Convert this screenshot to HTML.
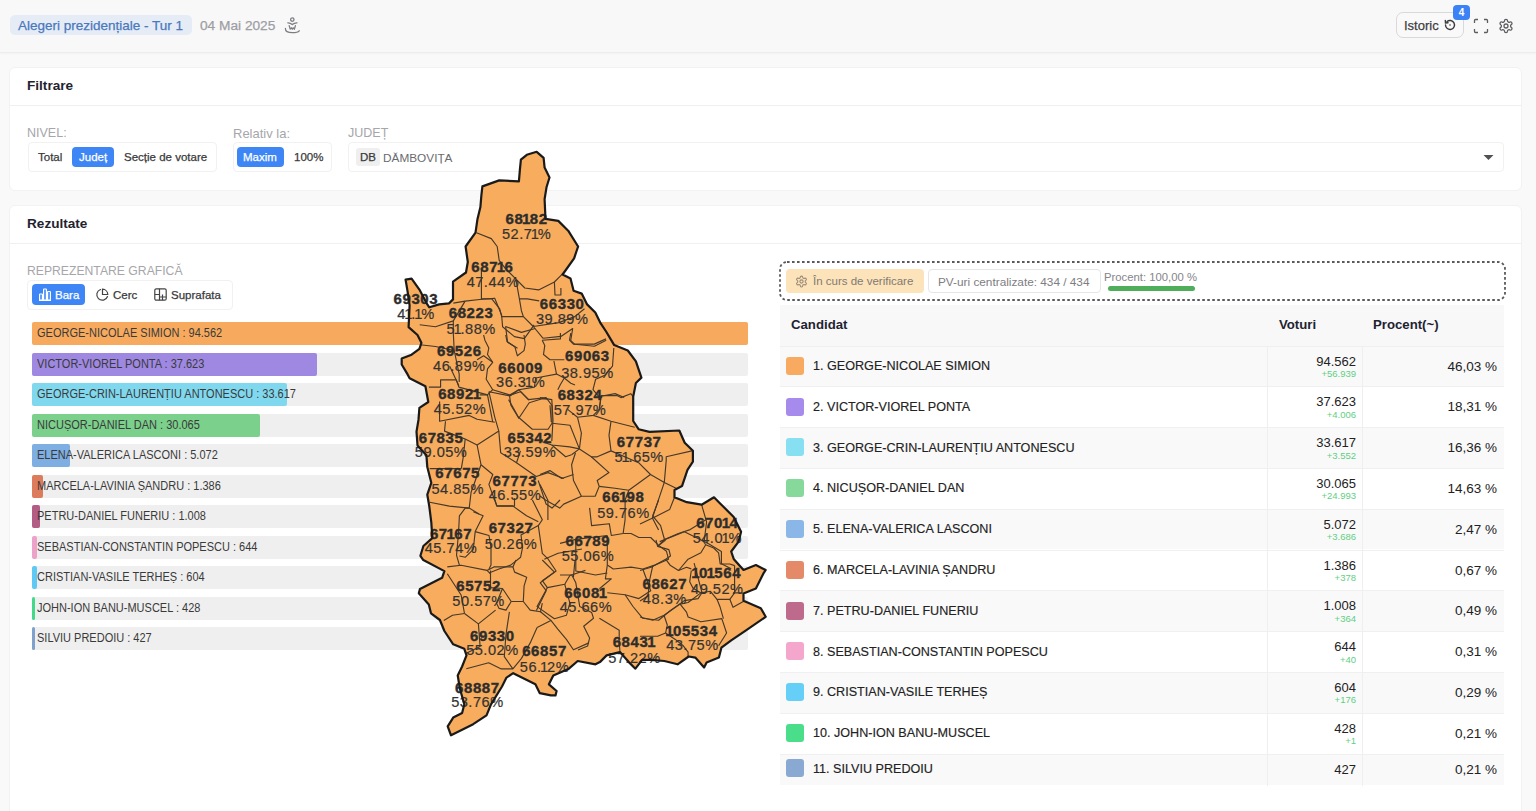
<!DOCTYPE html>
<html><head><meta charset="utf-8">
<style>
*{box-sizing:border-box;margin:0;padding:0}
html,body{width:1536px;height:811px;overflow:hidden}
body{background:#f9f9f9;font-family:"Liberation Sans",sans-serif;position:relative;color:#222}
.a{position:absolute;white-space:nowrap}
#hdr{position:absolute;left:0;top:0;width:1536px;height:53px;background:#f8f8f8;border-bottom:1px solid #ececec;box-shadow:0 1px 2px rgba(0,0,0,0.03)}
.card{position:absolute;background:#fff;border:1px solid #f2f2f2;border-radius:6px}
.ttl{font-weight:bold;font-size:13.6px;color:#1f2330}
.lbl{font-size:12.5px;color:#a6a6aa}
.m{-webkit-text-stroke:0.25px currentColor}
.seg{position:absolute;border:1px solid #f1f1f2;border-radius:4px;background:#fff}
.btn{position:absolute;background:#3e86f5;border-radius:4px}
.bar{position:absolute;left:32px;width:716px;height:23px;background:#efefef;border-radius:2px}
.bar i{position:absolute;left:0;top:0;bottom:0;border-radius:2px}
.bar span{position:absolute;left:5px;top:4px;font-size:11px;color:#3a3a3a;transform:scaleY(1.12);transform-origin:0 100%;top:5px}
.row{position:absolute;left:780px;width:724px;height:41px}
.row .sq{position:absolute;left:6px;width:18px;height:18px;border-radius:3px}
.row .nm{position:absolute;left:33px;font-size:12.6px;color:#222;-webkit-text-stroke:0.15px #222}
.row .vt{position:absolute;right:148px;font-size:13px;color:#222;text-align:right}
.row .dl{position:absolute;right:148px;font-size:9.5px;color:#5fcf83;text-align:right}
.row .pc{position:absolute;right:7px;font-size:13.5px;color:#222;text-align:right}
.vd{position:absolute;top:346px;width:1px;height:439.5px;background:#efeff0}
</style></head>
<body>
<div id="hdr">
  <div class="a" style="left:10px;top:15px;width:182px;height:20px;background:#e5ecf6;border-radius:5px"></div>
  <div class="a m" style="left:18px;top:17.5px;font-size:13.5px;color:#4a78bd">Alegeri prezidențiale - Tur 1</div>
  <div class="a m" style="left:200px;top:17.5px;font-size:13.7px;color:#9c9ea4">04 Mai 2025</div>

  <svg class="a" style="left:284px;top:17px" width="17" height="17" viewBox="0 0 17 17" fill="none" stroke="#7d7d82" stroke-width="1.3" stroke-linecap="round" stroke-linejoin="round">
    <circle cx="8.3" cy="2.6" r="1.7"/>
    <path d="M3.8 5.8 Q6 5.6 8.3 7.6 Q10.6 5.6 13 5.8"/>
    <path d="M5.2 8.6 L6.2 12.2 L7.4 10.8 L8.3 12.2 L9.2 10.8 L10.4 12.2 L11.4 8.6"/>
    <path d="M1.4 11.5 Q1.2 15.6 8.3 15.6 Q13.8 15.6 15.2 13.8"/>
  </svg>
  <div class="a" style="left:1396px;top:12px;width:68px;height:26px;border:1px solid #d9d9dc;border-radius:7px;background:#f9f9fa"></div>
  <div class="a m" style="left:1404px;top:17.5px;font-size:13px;color:#3e3e42">Istoric</div>
  <svg class="a" style="left:1443px;top:18px" width="14" height="14" viewBox="0 0 14 14" fill="none" stroke="#3a3a3e" stroke-width="1.4" stroke-linecap="round">
    <path d="M2.5 7 A4.5 4.5 0 1 0 4 3.6"/><path d="M2.3 2.5 L2.5 5 L5 4.8"/><circle cx="7" cy="7" r="0.8" fill="#3a3a3e" stroke="none"/>
  </svg>
  <div class="a" style="left:1453px;top:5px;width:17px;height:15px;background:#3b82f6;border-radius:4px;color:#fff;font-size:10px;font-weight:bold;text-align:center;line-height:15px">4</div>
  <svg class="a" style="left:1473px;top:18px" width="16" height="16" viewBox="0 0 16 16" fill="none" stroke="#5e5e62" stroke-width="1.3">
    <path d="M1.5 5 V2.5 Q1.5 1.5 2.5 1.5 H5 M11 1.5 H13.5 Q14.5 1.5 14.5 2.5 V5 M14.5 11 V13.5 Q14.5 14.5 13.5 14.5 H11 M5 14.5 H2.5 Q1.5 14.5 1.5 13.5 V11"/>
  </svg>
  <svg class="a" style="left:1498px;top:18px" width="16" height="16" viewBox="0 0 24 24" fill="none" stroke="#5e5e62" stroke-width="1.9" stroke-linejoin="round">
    <path d="M12.22 2h-.44a2 2 0 0 0-2 2v.18a2 2 0 0 1-1 1.73l-.43.25a2 2 0 0 1-2 0l-.15-.08a2 2 0 0 0-2.73.73l-.22.38a2 2 0 0 0 .73 2.73l.15.1a2 2 0 0 1 1 1.72v.51a2 2 0 0 1-1 1.74l-.15.09a2 2 0 0 0-.73 2.73l.22.38a2 2 0 0 0 2.73.73l.15-.08a2 2 0 0 1 2 0l.43.25a2 2 0 0 1 1 1.73V20a2 2 0 0 0 2 2h.44a2 2 0 0 0 2-2v-.18a2 2 0 0 1 1-1.73l.43-.25a2 2 0 0 1 2 0l.15.08a2 2 0 0 0 2.73-.73l.22-.39a2 2 0 0 0-.73-2.73l-.15-.08a2 2 0 0 1-1-1.74v-.5a2 2 0 0 1 1-1.74l.15-.09a2 2 0 0 0 .73-2.73l-.22-.38a2 2 0 0 0-2.73-.73l-.15.08a2 2 0 0 1-2 0l-.43-.25a2 2 0 0 1-1-1.73V4a2 2 0 0 0-2-2z"/><circle cx="12" cy="12" r="3"/>
  </svg>
</div>

<div class="card" style="left:9px;top:67px;width:1513px;height:124px"></div>
<div class="a ttl" style="left:27px;top:77.7px">Filtrare</div>
<div class="a" style="left:9px;top:105px;width:1513px;height:1px;background:#f0f0f1"></div>


<div class="a lbl" style="left:27px;top:126px">NIVEL:</div>
<div class="seg" style="left:28px;top:142px;width:189px;height:30px"></div>
<div class="a m" style="left:38px;top:151px;font-size:11.5px;color:#3a3a3a">Total</div>
<div class="btn" style="left:72px;top:147px;width:42px;height:20px"></div>
<div class="a m" style="left:79px;top:151px;font-size:11.5px;color:#fff">Județ</div>
<div class="a m" style="left:124px;top:151px;font-size:11.5px;color:#3a3a3a">Secție de votare</div>

<div class="a lbl" style="left:233px;top:125.5px;font-size:13px">Relativ la:</div>
<div class="seg" style="left:233px;top:142px;width:99px;height:30px"></div>
<div class="btn" style="left:237px;top:147px;width:47px;height:20px"></div>
<div class="a m" style="left:243px;top:151px;font-size:11.5px;color:#fff">Maxim</div>
<div class="a m" style="left:294px;top:151px;font-size:11.5px;color:#3a3a3a">100%</div>

<div class="a lbl" style="left:348px;top:126px">JUDEȚ</div>
<div class="seg" style="left:348px;top:142px;width:1156px;height:30px"></div>
<div class="a" style="left:356px;top:148px;width:24px;height:18px;background:#efeff0;border-radius:3px"></div>
<div class="a m" style="left:360px;top:151px;font-size:11.5px;color:#3a3a3a">DB</div>
<div class="a" style="left:383px;top:151px;font-size:11.8px;color:#6a6a6e">DĂMBOVIȚA</div>
<svg class="a" style="left:1483px;top:154px" width="11" height="7" viewBox="0 0 11 7"><path d="M0.5 1 H10.5 L5.5 6 Z" fill="#505055"/></svg>

<div class="card" style="left:9px;top:205px;width:1513px;height:700px"></div>
<div class="a ttl" style="left:27px;top:216.2px">Rezultate</div>
<div class="a" style="left:9px;top:243px;width:1513px;height:1px;background:#f0f0f1"></div>

<div class="a lbl" style="left:27px;top:264px;font-size:12.2px">REPREZENTARE GRAFICĂ</div>
<div class="seg" style="left:27px;top:280px;width:206px;height:30px"></div>
<div class="btn" style="left:32px;top:284px;width:53px;height:21px"></div>
<svg class="a" style="left:38px;top:288px" width="14" height="13" viewBox="0 0 14 13" fill="none" stroke="#fff" stroke-width="1.2"><path d="M1 12.5 H13"/><rect x="1.6" y="6" width="2.8" height="6" rx="0.5"/><rect x="5.6" y="1" width="2.8" height="11" rx="0.5"/><rect x="9.6" y="3.5" width="2.8" height="8.5" rx="0.5"/></svg>
<div class="a m" style="left:55px;top:289px;font-size:11.5px;color:#fff">Bara</div>
<svg class="a" style="left:95px;top:288px" width="14" height="14" viewBox="0 0 14 14" fill="none" stroke="#444" stroke-width="1.2" stroke-linecap="round"><path d="M12.5 8.5 A5.5 5.5 0 1 1 5.5 1.5"/><path d="M7.5 1.2 A5.5 5.5 0 0 1 12.8 6.5 H7.5 Z"/></svg>
<div class="a m" style="left:113px;top:289px;font-size:11.5px;color:#3a3a3a">Cerc</div>
<svg class="a" style="left:154px;top:288px" width="13" height="13" viewBox="0 0 13 13" fill="none" stroke="#444" stroke-width="1.2"><rect x="0.8" y="0.8" width="11.4" height="11.4" rx="1.5"/><path d="M5.5 0.8 V12.2 M0.8 6.5 H5.5 M8.5 6.5 V12.2 M5.5 9 H12.2"/></svg>
<div class="a m" style="left:171px;top:289px;font-size:11.5px;color:#3a3a3a">Suprafata</div>
<div class="bar" style="top:322.2px"><i style="width:716.0px;background:#f7aa5e"></i><span>GEORGE-NICOLAE SIMION : 94.562</span></div>
<div class="bar" style="top:352.7px"><i style="width:284.9px;background:#9e88e2"></i><span>VICTOR-VIOREL PONTA : 37.623</span></div>
<div class="bar" style="top:383.2px"><i style="width:254.5px;background:#80d8ef"></i><span>GEORGE-CRIN-LAURENȚIU ANTONESCU : 33.617</span></div>
<div class="bar" style="top:413.7px"><i style="width:227.6px;background:#7bd08b"></i><span>NICUȘOR-DANIEL DAN : 30.065</span></div>
<div class="bar" style="top:444.2px"><i style="width:38.4px;background:#7eaee2"></i><span>ELENA-VALERICA LASCONI : 5.072</span></div>
<div class="bar" style="top:474.7px"><i style="width:10.5px;background:#dd7c5c"></i><span>MARCELA-LAVINIA ȘANDRU : 1.386</span></div>
<div class="bar" style="top:505.2px"><i style="width:7.6px;background:#b35c84"></i><span>PETRU-DANIEL FUNERIU : 1.008</span></div>
<div class="bar" style="top:535.7px"><i style="width:4.9px;background:#eda2c9"></i><span>SEBASTIAN-CONSTANTIN POPESCU : 644</span></div>
<div class="bar" style="top:566.2px"><i style="width:4.6px;background:#5ec9f4"></i><span>CRISTIAN-VASILE TERHEȘ : 604</span></div>
<div class="bar" style="top:596.7px"><i style="width:3.4px;background:#42d98a"></i><span>JOHN-ION BANU-MUSCEL : 428</span></div>
<div class="bar" style="top:627.2px"><i style="width:3.4px;background:#7fa1cb"></i><span>SILVIU PREDOIU : 427</span></div>
<svg class="a" style="left:779px;top:261px" width="727" height="40"><rect x="1" y="1" width="725" height="38" rx="7" fill="none" stroke="#5a5a5e" stroke-width="1.8" stroke-dasharray="2.6 2.4"/></svg>
<div class="a" style="left:786px;top:269px;width:138px;height:24px;background:#fde3b9;border-radius:4px"></div>
<svg class="a" style="left:795px;top:275px" width="13" height="13" viewBox="0 0 24 24" fill="none" stroke="#9b8a78" stroke-width="2"><path d="M12.22 2h-.44a2 2 0 0 0-2 2v.18a2 2 0 0 1-1 1.73l-.43.25a2 2 0 0 1-2 0l-.15-.08a2 2 0 0 0-2.73.73l-.22.38a2 2 0 0 0 .73 2.73l.15.1a2 2 0 0 1 1 1.72v.51a2 2 0 0 1-1 1.74l-.15.09a2 2 0 0 0-.73 2.73l.22.38a2 2 0 0 0 2.73.73l.15-.08a2 2 0 0 1 2 0l.43.25a2 2 0 0 1 1 1.73V20a2 2 0 0 0 2 2h.44a2 2 0 0 0 2-2v-.18a2 2 0 0 1 1-1.73l.43-.25a2 2 0 0 1 2 0l.15.08a2 2 0 0 0 2.73-.73l.22-.39a2 2 0 0 0-.73-2.73l-.15-.08a2 2 0 0 1-1-1.74v-.5a2 2 0 0 1 1-1.74l.15-.09a2 2 0 0 0 .73-2.73l-.22-.38a2 2 0 0 0-2.73-.73l-.15.08a2 2 0 0 1-2 0l-.43-.25a2 2 0 0 1-1-1.73V4a2 2 0 0 0-2-2z"/><circle cx="12" cy="12" r="3"/></svg>
<div class="a" style="left:813px;top:275px;font-size:11.5px;color:#7e7a74">În curs de verificare</div>
<div class="a" style="left:928px;top:269px;width:173px;height:24px;border:1px solid #e6e6e8;border-radius:4px"></div>
<div class="a" style="left:938px;top:275px;font-size:11.8px;color:#7d7d82">PV-uri centralizate: 434 / 434</div>
<div class="a" style="left:1104px;top:270.5px;font-size:11.3px;color:#85858a">Procent: 100,00 %</div>
<div class="a" style="left:1108px;top:286px;width:87px;height:5px;background:#4eae5a;border-radius:3px"></div>
<div class="a" style="left:780px;top:305px;width:724px;height:41px;background:#f8f8f9"></div>
<div class="a ttl" style="left:791px;top:317.3px;font-size:13.2px">Candidat</div>
<div class="a ttl" style="left:1279px;top:317.3px;font-size:13.2px">Voturi</div>
<div class="a ttl" style="left:1373px;top:317.3px;font-size:13.2px">Procent(~)</div>
<div class="row" style="top:345.50px;height:40.8px;background:#f9f9fa;border-top:1px solid #f0f0f1"><i class="sq" style="top:10.3px;background:#f8ab60"></i><span class="nm" style="top:12.5px">1. GEORGE-NICOLAE SIMION</span><span class="vt" style="top:7px">94.562</span><span class="dl" style="top:21.5px">+56.939</span><span class="pc" style="top:12px">46,03 %</span></div>
<div class="row" style="top:386.30px;height:40.8px;background:#fff;border-top:1px solid #f0f0f1"><i class="sq" style="top:10.3px;background:#a78bec"></i><span class="nm" style="top:12.5px">2. VICTOR-VIOREL PONTA</span><span class="vt" style="top:7px">37.623</span><span class="dl" style="top:21.5px">+4.006</span><span class="pc" style="top:12px">18,31 %</span></div>
<div class="row" style="top:427.10px;height:40.8px;background:#f9f9fa;border-top:1px solid #f0f0f1"><i class="sq" style="top:10.3px;background:#86e0f2"></i><span class="nm" style="top:12.5px">3. GEORGE-CRIN-LAURENȚIU ANTONESCU</span><span class="vt" style="top:7px">33.617</span><span class="dl" style="top:21.5px">+3.552</span><span class="pc" style="top:12px">16,36 %</span></div>
<div class="row" style="top:467.90px;height:40.8px;background:#fff;border-top:1px solid #f0f0f1"><i class="sq" style="top:10.3px;background:#86d99a"></i><span class="nm" style="top:12.5px">4. NICUȘOR-DANIEL DAN</span><span class="vt" style="top:7px">30.065</span><span class="dl" style="top:21.5px">+24.993</span><span class="pc" style="top:12px">14,63 %</span></div>
<div class="row" style="top:508.70px;height:40.8px;background:#f9f9fa;border-top:1px solid #f0f0f1"><i class="sq" style="top:10.3px;background:#8ab7e8"></i><span class="nm" style="top:12.5px">5. ELENA-VALERICA LASCONI</span><span class="vt" style="top:7px">5.072</span><span class="dl" style="top:21.5px">+3.686</span><span class="pc" style="top:12px">2,47 %</span></div>
<div class="row" style="top:549.50px;height:40.8px;background:#fff;border-top:1px solid #f0f0f1"><i class="sq" style="top:10.3px;background:#e58a68"></i><span class="nm" style="top:12.5px">6. MARCELA-LAVINIA ȘANDRU</span><span class="vt" style="top:7px">1.386</span><span class="dl" style="top:21.5px">+378</span><span class="pc" style="top:12px">0,67 %</span></div>
<div class="row" style="top:590.30px;height:40.8px;background:#f9f9fa;border-top:1px solid #f0f0f1"><i class="sq" style="top:10.3px;background:#bd6a8d"></i><span class="nm" style="top:12.5px">7. PETRU-DANIEL FUNERIU</span><span class="vt" style="top:7px">1.008</span><span class="dl" style="top:21.5px">+364</span><span class="pc" style="top:12px">0,49 %</span></div>
<div class="row" style="top:631.10px;height:40.8px;background:#fff;border-top:1px solid #f0f0f1"><i class="sq" style="top:10.3px;background:#f4a6cc"></i><span class="nm" style="top:12.5px">8. SEBASTIAN-CONSTANTIN POPESCU</span><span class="vt" style="top:7px">644</span><span class="dl" style="top:21.5px">+40</span><span class="pc" style="top:12px">0,31 %</span></div>
<div class="row" style="top:671.90px;height:40.8px;background:#f9f9fa;border-top:1px solid #f0f0f1"><i class="sq" style="top:10.3px;background:#66cff8"></i><span class="nm" style="top:12.5px">9. CRISTIAN-VASILE TERHEȘ</span><span class="vt" style="top:7px">604</span><span class="dl" style="top:21.5px">+176</span><span class="pc" style="top:12px">0,29 %</span></div>
<div class="row" style="top:712.70px;height:40.8px;background:#fff;border-top:1px solid #f0f0f1"><i class="sq" style="top:10.3px;background:#4ade8a"></i><span class="nm" style="top:12.5px">10. JOHN-ION BANU-MUSCEL</span><span class="vt" style="top:7px">428</span><span class="dl" style="top:21.5px">+1</span><span class="pc" style="top:12px">0,21 %</span></div>
<div class="row" style="top:753.50px;height:31.5px;background:#f9f9fa;border-top:1px solid #f0f0f1"><i class="sq" style="top:4.9px;background:#8aa9d2"></i><span class="nm" style="top:7.2px">11. SILVIU PREDOIU</span><span class="vt" style="top:7.5px">427</span><span class="dl" style="top:0px"></span><span class="pc" style="top:7.2px">0,21 %</span></div>
<div class="vd" style="left:1267px"></div><div class="vd" style="left:1362px"></div>
<svg class="a" style="left:0;top:0" width="1536" height="811" viewBox="0 0 1536 811">
<defs><clipPath id="cp"><polygon points="536.7,151.8 543.6,157.8 544.6,167.6 549.5,177.5 546.5,187.3 544.6,199.2 545.5,218.9 558.3,220.9 568.2,230.7 578.1,246.5 574.1,258.3 562.6,274.5 570.5,278.5 573.6,290.8 581.7,293.6 587.1,304.4 595.3,312.5 600.7,323.4 606.1,331.5 614.2,345.1 627.8,350.5 635.9,361.4 641.4,377.6 635.9,383 633.2,396.6 633.2,421 638.6,429.2 649.5,431.9 679.3,430.5 684.7,442.7 692.9,450.8 692.9,461.7 687.5,469.8 682,486.1 674.5,489.9 674.5,497.3 686.8,502.2 701.6,504.7 714,497.3 718.9,502.2 733.7,517 741.1,531.8 738.6,541.6 731.2,551.5 733.7,558.9 743.5,570 755.9,565.1 765.7,570 763.3,573.7 755.9,588.5 743.5,593.4 743.5,600.8 760.8,608.2 765.7,616.8 746,630.4 731.2,640.3 721.4,647.7 718.9,657.5 706.6,662.4 704.1,667.4 695.3,657.6 688.7,656.5 677.6,664.3 664.3,661 651,659.9 642.1,659.9 635.4,668.7 628.8,662.1 619.9,652.1 606.6,655.4 599.9,662.1 595.5,664.3 577.7,661 568.9,668.7 553.3,675.4 548.9,684.3 556.6,691 555.5,695.4 550.9,695.4 539.8,693.2 535.4,684.3 513.2,673.2 506.5,677.6 502,686.5 491,704.3 486.5,715.3 473.2,724.2 451,735.3 447.7,726.4 453.2,717.6 462.1,713.1 464.3,704.3 459.9,688.7 457.7,675.4 462.1,666.5 466.5,655.4 464.3,648.8 453.2,644.3 444.4,631 439.9,620 431,613.3 428.8,604.4 418.8,593.3 420,588.9 442.1,577.8 444.4,571.1 423.3,560 420.4,555.8 423.4,546 432.3,538.1 431.3,522.3 429.3,506.5 427.3,494.7 431.3,482.8 427.3,467.1 426.4,455.2 417.5,445.4 416.5,431.6 418.5,419.7 419.4,407.9 428.3,402 425.4,386.2 409.6,378.3 407.6,374.4 401.7,364.5 401.7,358.6 411.6,354.7 419.4,348.8 421.4,342.8 417.5,335 408.6,327.1 409.6,305.4 407.6,291.6 405.6,279.7 411.6,278.7 419.4,289.6 427.3,304.4 429.3,307.3 439.2,304.4 449,303.4 453,299.4 453,281.7 466,272.5 467.8,262 465.6,246.5 475.5,232.7 477.5,218.9 480.4,207 481.4,195.2 482.4,186.4 499.2,180.4 518.9,181.4 519.9,169.6 520.9,159.7 526.8,154.8"/></clipPath></defs><polygon id="shape" points="536.7,151.8 543.6,157.8 544.6,167.6 549.5,177.5 546.5,187.3 544.6,199.2 545.5,218.9 558.3,220.9 568.2,230.7 578.1,246.5 574.1,258.3 562.6,274.5 570.5,278.5 573.6,290.8 581.7,293.6 587.1,304.4 595.3,312.5 600.7,323.4 606.1,331.5 614.2,345.1 627.8,350.5 635.9,361.4 641.4,377.6 635.9,383 633.2,396.6 633.2,421 638.6,429.2 649.5,431.9 679.3,430.5 684.7,442.7 692.9,450.8 692.9,461.7 687.5,469.8 682,486.1 674.5,489.9 674.5,497.3 686.8,502.2 701.6,504.7 714,497.3 718.9,502.2 733.7,517 741.1,531.8 738.6,541.6 731.2,551.5 733.7,558.9 743.5,570 755.9,565.1 765.7,570 763.3,573.7 755.9,588.5 743.5,593.4 743.5,600.8 760.8,608.2 765.7,616.8 746,630.4 731.2,640.3 721.4,647.7 718.9,657.5 706.6,662.4 704.1,667.4 695.3,657.6 688.7,656.5 677.6,664.3 664.3,661 651,659.9 642.1,659.9 635.4,668.7 628.8,662.1 619.9,652.1 606.6,655.4 599.9,662.1 595.5,664.3 577.7,661 568.9,668.7 553.3,675.4 548.9,684.3 556.6,691 555.5,695.4 550.9,695.4 539.8,693.2 535.4,684.3 513.2,673.2 506.5,677.6 502,686.5 491,704.3 486.5,715.3 473.2,724.2 451,735.3 447.7,726.4 453.2,717.6 462.1,713.1 464.3,704.3 459.9,688.7 457.7,675.4 462.1,666.5 466.5,655.4 464.3,648.8 453.2,644.3 444.4,631 439.9,620 431,613.3 428.8,604.4 418.8,593.3 420,588.9 442.1,577.8 444.4,571.1 423.3,560 420.4,555.8 423.4,546 432.3,538.1 431.3,522.3 429.3,506.5 427.3,494.7 431.3,482.8 427.3,467.1 426.4,455.2 417.5,445.4 416.5,431.6 418.5,419.7 419.4,407.9 428.3,402 425.4,386.2 409.6,378.3 407.6,374.4 401.7,364.5 401.7,358.6 411.6,354.7 419.4,348.8 421.4,342.8 417.5,335 408.6,327.1 409.6,305.4 407.6,291.6 405.6,279.7 411.6,278.7 419.4,289.6 427.3,304.4 429.3,307.3 439.2,304.4 449,303.4 453,299.4 453,281.7 466,272.5 467.8,262 465.6,246.5 475.5,232.7 477.5,218.9 480.4,207 481.4,195.2 482.4,186.4 499.2,180.4 518.9,181.4 519.9,169.6 520.9,159.7 526.8,154.8" fill="#f8ac5d"/>
<g id="inner" clip-path="url(#cp)" fill="none" stroke="#45392b" stroke-width="1.15" stroke-linejoin="round"><polyline points="476.5,232.7 491.3,238.6 497.2,246.5 499.2,260.3 505.1,268.2 515,278.1 524.8,288 538.6,289.9 554.4,282 562.3,274.1"/><polyline points="481.4,268.2 481.4,299.2 494.7,298.2 501.6,315 502.6,326.8 514.4,336.6 524.3,338.6 534.1,324.8"/><polyline points="554.4,282 555,295 560.9,295 560.9,288"/><polyline points="515.5,277.2 519.4,298.9 521.4,310.7 523.4,316.6"/><polyline points="519.4,298.9 527.3,298.9 539.2,300.9"/><polyline points="482,298.9 491.8,298.9 499.7,308.8 501.7,316.6 509.6,316.6 523.4,316.6 533.3,326.5 543.1,338.3"/><polyline points="533.3,326.5 558.9,322.6 574.7,316.6 584.5,308.8"/><polyline points="543.1,338.3 560.9,336.4 572.7,328.5 570.7,340.3 574.7,344.3 594.4,346.2 606.2,340.3"/><polyline points="505.6,326.5 521.4,332.4 535.2,328.5"/><polyline points="505.6,326.5 507.6,342.3 517.5,348.2"/><polyline points="453.3,303.1 465.1,301.1 481.9,299.2"/><polyline points="419.7,324.8 435.5,326.8 453.3,320.9 465.1,301.1"/><polyline points="453.3,320.9 453.3,332.7 454.2,350.5 459.2,374.1 459.2,382"/><polyline points="417.8,344.5 435.5,346.5 454.2,350.5"/><polyline points="488.9,391.7 494.8,417.3 498.8,431.1 477.1,445 465.2,439 444.5,431.1 445.5,421.3"/><polyline points="465.2,439 463.3,456.8 461.3,468.6"/><polyline points="477.1,445 481,464.7 471.1,492.3 469.2,508.1 465.4,507.9 459.4,515.8 458.5,533.5 456.5,555.2 459.4,565.1"/><polyline points="429.7,468.6 461.3,468.6"/><polyline points="429.7,502.2 449.4,506.1 469.2,508.1 479,514"/><polyline points="481,464.7 492.8,474.5 488.9,484.4 496.8,506.1 514.5,506.1 514.5,498.2"/><polyline points="498.8,431.1 500.7,452.8 516.5,462.7 520.5,450.9"/><polyline points="516.5,462.7 536.2,476.5 548.1,472.6 563.8,478.5"/><polyline points="538.2,480.5 546.1,504.1 552,508.1 560,500"/><polyline points="488.9,391.7 508.6,395.6 520.5,391.7 528.3,399.6 546.1,397.6 552,405.5 552,423.3 548.1,429.2 532.3,429.2 518.5,417.3 508.6,399.6"/><polyline points="552,423.3 570,425.2 579.4,448.9"/><polyline points="540,397.6 551.8,399.6 553,420 551.8,441"/><polyline points="567.6,409.4 577.5,417.3 593.3,415.4 599.2,409.4 601.1,395.6 616.9,395.6 620.9,397.6 630.7,393.7 633.2,396.6"/><polyline points="577.5,417.3 581.4,433.1 579.4,448.9 571.6,454.8"/><polyline points="593.3,415.4 611,421.3 634.7,427.2"/><polyline points="611,421.3 609,435.1 611,450.9 597.2,456.8 591.3,456.8 579.4,448.9"/><polyline points="540,441 551.8,445 569.6,446.9 579.4,448.9"/><polyline points="551.8,445 565.6,456.8 571.6,454.8"/><polyline points="575.5,452.8 571.6,464.7 573.5,480.5 581.4,496.2 595.2,496.2 599.2,486.4 597.2,480.5 609,472.6 591.3,456.8"/><polyline points="540,474.5 549.9,470.6 561.7,478.5 573.5,474.5"/><polyline points="611,450.9 638.6,462.7 650.5,474.5 664.3,482.4 666.2,460.7 666.2,456.8 691.9,450.9"/><polyline points="664.3,482.4 676.1,488.3"/><polyline points="650.5,474.5 628.8,490.3 625.1,500 625.1,519.7"/><polyline points="664.3,482.4 652.4,517.9 658.6,530"/><polyline points="599.2,486.4 615,488.3 628.8,490.3"/><polyline points="581.4,496.2 563.7,504.1 559.7,508.1 545.9,500.2 540,496"/><polyline points="540,484.4 547.9,500.2 547.9,520"/><polyline points="473.3,511.8 483.1,515.8 475.2,531.6 473.3,549.3 465.4,557.2 459.4,556"/><polyline points="475.2,531.6 489,535.5 491,547.3 491,565.1 489,569"/><polyline points="489,573 498.9,569 510.7,565.1 520.6,557.2 522.6,547.3 521,535 538.3,525.6"/><polyline points="495,500 496.9,505.9 512.7,505.9 526.5,515.8 538.3,521.7"/><polyline points="532.4,500 542.3,519.7 538.3,525.6 542.3,553.3 548.2,559.2 556.1,571 540.3,582.8 546.2,590.7 536.4,610.5"/><polyline points="544.3,559.2 558.1,553.3 582,549"/><polyline points="589.6,507.9 591.6,525.6 609.3,523.7 611.3,535.5 623.1,533.5 625.1,519.7"/><polyline points="623.1,533.5 631,533.5 638.9,537.5 650.7,537.5 658.6,545.4 666.5,551.3 668.5,559.2 654.7,565.1 642.8,569 631,567.1 613.3,569 607.3,565.1"/><polyline points="658.6,500 652.7,515.8 660.6,525.6 664.5,539.5 658.6,545.4"/><polyline points="664.5,539.5 678.3,533.5 690.2,529.6 706,519.7"/><polyline points="607.3,535.5 607.3,565.1 605.4,578.9 611.3,578.9 599.4,588.8"/><polyline points="560,543.4 575.8,539.4 607.3,535.5"/><polyline points="575.8,539.4 575.8,571 595.5,575 607.3,573"/><polyline points="560,575 571.8,575 575.8,582.8 577.8,594.7 579.7,606.5 591.6,612.4 593.5,618.3 583.7,626.2 589.6,638.1 587.6,646 578,650"/><polyline points="607.3,592.7 625.1,594.7 638.9,598.6 650.7,590.7 642.8,569"/><polyline points="625.1,594.7 633,606.5 642.8,618.3 658.6,620.3 670.5,610.5 684.3,600.6 698.1,598.6 702,592.7 694.1,563.1"/><polyline points="599.4,618.3 619.2,630.2 619.2,642 620,652"/><polyline points="674.5,497.3 669.6,509.6 654.8,517 640,524"/><polyline points="701.6,504.7 706.6,521.9 704.1,541.6 709,544.1 721.4,551.5 721.4,563.8 731.2,568.8"/><polyline points="659.7,541.6 684.4,531.8 704.1,541.6"/><polyline points="447.3,566.9 461.1,565.2 487,570.4 490.5,573.8"/><polyline points="487,570.4 493.9,566.9 512.9,566.9 516,560"/><polyline points="490.5,570.4 490.5,587.6 502.5,588.5 511.2,601.5 506,610.1 499.1,608.4 496.5,603.2 502.5,588.5"/><polyline points="512.9,566.9 514.6,572.1 526.7,577.3 524.1,585.9 523.3,601.5 511.2,601.5"/><polyline points="523.3,601.5 530.2,610.1 540.5,611.8 542.3,603.2"/><polyline points="540.5,611.8 550.9,620.4"/><polyline points="464.5,613.5 452.5,615.3 443.8,620.4"/><polyline points="464.5,613.5 478.4,623.9 495.6,610.1"/><polyline points="478.4,623.9 480.1,646.4 466.3,653.3"/><polyline points="509.4,611.8 506,634.3 504.3,656.7 512.9,668.8"/><polyline points="537.1,627.4 530.2,642.9 521.5,658.4 512.9,668.8"/><polyline points="537.1,627.4 550.9,620.4 557.8,629.1 566.4,639.4 573.4,649.8 588.9,642.9"/><polyline points="466.3,668.8 488.7,662.8 500.8,668.8 512.9,668.8"/><polyline points="542.3,560 554.4,572.1 542.3,580.7 547.4,587.6 564.7,584.2 569.9,575.5 585.4,570.4"/><polyline points="547.4,587.6 537.1,606.6 554.4,618.7 566.4,615.3 569.9,603.2 564.7,584.2"/><polyline points="573.4,577.3 575,560"/><polyline points="464.5,613.5 461.1,595 447.3,573.8"/><polyline points="656,540 657.6,546.4 668.9,549.6 670.5,556 665.6,559.2 651.2,567.3 640,570.5"/><polyline points="657.6,546.4 665.6,540"/><polyline points="665.6,559.2 670.5,565.6 678.5,570.5 686.5,567.3 691.3,568.9"/><polyline points="678.5,570.5 688.1,559.2 700.9,552.8 705.7,544.8 713.7,548 718.6,552.8 720.2,564 729.8,564 734.6,565.6"/><polyline points="705.7,544.8 702.5,540"/><polyline points="652.8,565.6 649.6,580.1 648,596.1 640,600.9"/><polyline points="691.3,570.5 689.7,581.7 692.9,588.1 700.9,592.9 710.5,591.3 717,599.3 729.8,599.3 734.6,592.9 734.6,565.6"/><polyline points="700.9,592.9 688.1,602.5 680.1,604.1 664,615.3 652.8,620.2 640,617"/><polyline points="680.1,604.1 686.5,612.1 688.1,617 700.9,621.8 721.8,618.6 726.6,633 718.6,645.8"/><polyline points="717,599.3 720.2,607.3 723.4,618.6"/><polyline points="664,615.3 667.3,625 665.6,633 657.6,636.2 640,636.2"/><polyline points="665.6,633 675.3,639.4 683.3,645.8 688.1,652.2 688,662"/><polyline points="729.8,599.3 733,607.3 744.2,600.9"/><polyline points="733,592.9 742.6,592.9"/><polyline points="483.6,335 484.9,340.2 488.8,348 487.5,354.5 492.7,362.3 487.5,368.9 486.2,379.3 492.7,389.7 487.5,394.9 479.7,394.9"/><polyline points="492.7,362.3 483.6,355.8 477.1,359.7"/><polyline points="505.7,335 507,341.5 514.8,346.7 517.4,355.8 524,350.6 525.3,344.1 524,335"/><polyline points="492.7,389.7 509.6,394.9 518.8,389.7 534.4,387.1 535.7,378 542.2,376.7 556.5,374.1 564.3,378 570.8,383.2 575,385"/><polyline points="518.8,389.7 509.6,396.2 510.9,405.3 518.8,418.3 529.2,402.7 542.2,398.8 547,398.8"/><polyline points="518.8,389.7 529.2,400.1"/><polyline points="542.2,340.2 544.8,345.4 543.5,354.5 550,359.7 564.3,359.7"/><polyline points="553.9,361 556.5,374.1"/><polyline points="542.2,340.2 560.4,338.9 560.4,333"/><polyline points="570.8,333 569.5,340.2 573.4,344.1 594.3,344.1 606,338.9"/><polyline points="613.8,348 612.5,366.2 604.7,375.4 595.6,379.3 593,389.7 600.8,398.8 599.5,407.9"/><polyline points="564.3,378 560.4,384.5 557.8,389.7"/><polyline points="600.8,396.2 615.1,393.6 624.2,397.5"/><polyline points="550,405.3 551.3,422"/><polyline points="428.9,387.1 440.6,387.1 440.6,379.9 456.3,379.9 458.9,387.1 487.5,394.9"/><polyline points="449.7,366.2 458.9,385.8"/><polyline points="487.5,394.9 492.7,422"/><polyline points="439.6,401.6 439.6,421.3 469.2,415.4 477.1,419.3 494.8,422.3"/></g>
<g font-family="Liberation Sans" text-anchor="middle" fill="#2e2e2e">
<text x="526.6" y="223.8" font-size="15" font-weight="bold" letter-spacing="0.6" stroke="#2a2a2a" stroke-width="0.35">68<tspan dx="-1.25">1</tspan><tspan dx="-1.25">8</tspan>2</text>
<text x="526.6" y="238.6" font-size="14.6" fill="#333" letter-spacing="0.5" stroke="#333" stroke-width="0.2">52.7<tspan dx="-1.60">1</tspan><tspan dx="-1.60">%</tspan></text>
<text x="492.4" y="271.8" font-size="15" font-weight="bold" letter-spacing="0.6" stroke="#2a2a2a" stroke-width="0.35">687<tspan dx="-1.25">1</tspan><tspan dx="-1.25">6</tspan></text>
<text x="492.9" y="287.2" font-size="14.6" fill="#333" letter-spacing="0.5" stroke="#333" stroke-width="0.2">47.44%</text>
<text x="415.9" y="304.0" font-size="15" font-weight="bold" letter-spacing="0.6" stroke="#2a2a2a" stroke-width="0.35">69303</text>
<text x="415.9" y="319.2" font-size="14.6" fill="#333" letter-spacing="0.5" stroke="#333" stroke-width="0.2">4<tspan dx="-1.60">1</tspan><tspan dx="-1.60">.</tspan><tspan dx="-1.60">1</tspan><tspan dx="-1.60">%</tspan></text>
<text x="471.1" y="318.2" font-size="15" font-weight="bold" letter-spacing="0.6" stroke="#2a2a2a" stroke-width="0.35">68223</text>
<text x="471.1" y="334.0" font-size="14.6" fill="#333" letter-spacing="0.5" stroke="#333" stroke-width="0.2">5<tspan dx="-1.60">1</tspan><tspan dx="-1.60">.</tspan>88%</text>
<text x="562.2" y="309.4" font-size="15" font-weight="bold" letter-spacing="0.6" stroke="#2a2a2a" stroke-width="0.35">66330</text>
<text x="562.2" y="324.2" font-size="14.6" fill="#333" letter-spacing="0.5" stroke="#333" stroke-width="0.2">39.89%</text>
<text x="459.3" y="355.7" font-size="15" font-weight="bold" letter-spacing="0.6" stroke="#2a2a2a" stroke-width="0.35">69526</text>
<text x="459.3" y="370.5" font-size="14.6" fill="#333" letter-spacing="0.5" stroke="#333" stroke-width="0.2">46.89%</text>
<text x="520.7" y="372.5" font-size="15" font-weight="bold" letter-spacing="0.6" stroke="#2a2a2a" stroke-width="0.35">66009</text>
<text x="520.7" y="387.3" font-size="14.6" fill="#333" letter-spacing="0.5" stroke="#333" stroke-width="0.2">36.3<tspan dx="-1.60">1</tspan><tspan dx="-1.60">%</tspan></text>
<text x="587.4" y="361.2" font-size="15" font-weight="bold" letter-spacing="0.6" stroke="#2a2a2a" stroke-width="0.35">69063</text>
<text x="587.4" y="378.0" font-size="14.6" fill="#333" letter-spacing="0.5" stroke="#333" stroke-width="0.2">38.95%</text>
<text x="459.9" y="399.0" font-size="15" font-weight="bold" letter-spacing="0.6" stroke="#2a2a2a" stroke-width="0.35">6892<tspan dx="-1.25">1</tspan></text>
<text x="459.9" y="413.9" font-size="14.6" fill="#333" letter-spacing="0.5" stroke="#333" stroke-width="0.2">45.52%</text>
<text x="580" y="400.0" font-size="15" font-weight="bold" letter-spacing="0.6" stroke="#2a2a2a" stroke-width="0.35">68324</text>
<text x="580" y="414.9" font-size="14.6" fill="#333" letter-spacing="0.5" stroke="#333" stroke-width="0.2">57.97%</text>
<text x="441.1" y="442.7" font-size="15" font-weight="bold" letter-spacing="0.6" stroke="#2a2a2a" stroke-width="0.35">67835</text>
<text x="441.1" y="457.3" font-size="14.6" fill="#333" letter-spacing="0.5" stroke="#333" stroke-width="0.2">59.05%</text>
<text x="529.9" y="442.7" font-size="15" font-weight="bold" letter-spacing="0.6" stroke="#2a2a2a" stroke-width="0.35">65342</text>
<text x="529.9" y="457.3" font-size="14.6" fill="#333" letter-spacing="0.5" stroke="#333" stroke-width="0.2">33.59%</text>
<text x="639.2" y="446.6" font-size="15" font-weight="bold" letter-spacing="0.6" stroke="#2a2a2a" stroke-width="0.35">67737</text>
<text x="639.2" y="461.6" font-size="14.6" fill="#333" letter-spacing="0.5" stroke="#333" stroke-width="0.2">5<tspan dx="-1.60">1</tspan><tspan dx="-1.60">.</tspan>65%</text>
<text x="457.7" y="478.2" font-size="15" font-weight="bold" letter-spacing="0.6" stroke="#2a2a2a" stroke-width="0.35">67675</text>
<text x="457.7" y="494.0" font-size="14.6" fill="#333" letter-spacing="0.5" stroke="#333" stroke-width="0.2">54.85%</text>
<text x="514.9" y="486.1" font-size="15" font-weight="bold" letter-spacing="0.6" stroke="#2a2a2a" stroke-width="0.35">67773</text>
<text x="514.9" y="499.9" font-size="14.6" fill="#333" letter-spacing="0.5" stroke="#333" stroke-width="0.2">46.55%</text>
<text x="623.4" y="501.9" font-size="15" font-weight="bold" letter-spacing="0.6" stroke="#2a2a2a" stroke-width="0.35">66<tspan dx="-1.25">1</tspan><tspan dx="-1.25">9</tspan>8</text>
<text x="623.4" y="517.6" font-size="14.6" fill="#333" letter-spacing="0.5" stroke="#333" stroke-width="0.2">59.76%</text>
<text x="717.3" y="528.3" font-size="15" font-weight="bold" letter-spacing="0.6" stroke="#2a2a2a" stroke-width="0.35">670<tspan dx="-1.25">1</tspan><tspan dx="-1.25">4</tspan></text>
<text x="717.3" y="542.5" font-size="14.6" fill="#333" letter-spacing="0.5" stroke="#333" stroke-width="0.2">54.0<tspan dx="-1.60">1</tspan><tspan dx="-1.60">%</tspan></text>
<text x="451" y="538.6" font-size="15" font-weight="bold" letter-spacing="0.6" stroke="#2a2a2a" stroke-width="0.35">67<tspan dx="-1.25">1</tspan><tspan dx="-1.25">6</tspan>7</text>
<text x="451" y="553.2" font-size="14.6" fill="#333" letter-spacing="0.5" stroke="#333" stroke-width="0.2">45.74%</text>
<text x="511" y="533.4" font-size="15" font-weight="bold" letter-spacing="0.6" stroke="#2a2a2a" stroke-width="0.35">67327</text>
<text x="511" y="549.2" font-size="14.6" fill="#333" letter-spacing="0.5" stroke="#333" stroke-width="0.2">50.26%</text>
<text x="587.9" y="546.4" font-size="15" font-weight="bold" letter-spacing="0.6" stroke="#2a2a2a" stroke-width="0.35">66789</text>
<text x="587.9" y="561.0" font-size="14.6" fill="#333" letter-spacing="0.5" stroke="#333" stroke-width="0.2">55.06%</text>
<text x="717.4" y="578.0" font-size="15" font-weight="bold" letter-spacing="0.6" stroke="#2a2a2a" stroke-width="0.35"><tspan dx="-1.25">1</tspan><tspan dx="-1.25">0</tspan><tspan dx="-1.25">1</tspan><tspan dx="-1.25">5</tspan>64</text>
<text x="717.3" y="593.8" font-size="14.6" fill="#333" letter-spacing="0.5" stroke="#333" stroke-width="0.2">49.52%</text>
<text x="478.6" y="590.6" font-size="15" font-weight="bold" letter-spacing="0.6" stroke="#2a2a2a" stroke-width="0.35">65752</text>
<text x="478.6" y="606.4" font-size="14.6" fill="#333" letter-spacing="0.5" stroke="#333" stroke-width="0.2">50.57%</text>
<text x="585.9" y="597.7" font-size="15" font-weight="bold" letter-spacing="0.6" stroke="#2a2a2a" stroke-width="0.35">6608<tspan dx="-1.25">1</tspan></text>
<text x="585.9" y="612.3" font-size="14.6" fill="#333" letter-spacing="0.5" stroke="#333" stroke-width="0.2">45.66%</text>
<text x="664.8" y="588.7" font-size="15" font-weight="bold" letter-spacing="0.6" stroke="#2a2a2a" stroke-width="0.35">68627</text>
<text x="664.8" y="604.4" font-size="14.6" fill="#333" letter-spacing="0.5" stroke="#333" stroke-width="0.2">48.3%</text>
<text x="692.7" y="635.6" font-size="15" font-weight="bold" letter-spacing="0.6" stroke="#2a2a2a" stroke-width="0.35"><tspan dx="-1.25">1</tspan><tspan dx="-1.25">0</tspan>5534</text>
<text x="692.4" y="649.8" font-size="14.6" fill="#333" letter-spacing="0.5" stroke="#333" stroke-width="0.2">43.75%</text>
<text x="492.4" y="641.1" font-size="15" font-weight="bold" letter-spacing="0.6" stroke="#2a2a2a" stroke-width="0.35">69330</text>
<text x="492.4" y="654.9" font-size="14.6" fill="#333" letter-spacing="0.5" stroke="#333" stroke-width="0.2">55.02%</text>
<text x="544.5" y="655.7" font-size="15" font-weight="bold" letter-spacing="0.6" stroke="#2a2a2a" stroke-width="0.35">66857</text>
<text x="544.5" y="671.5" font-size="14.6" fill="#333" letter-spacing="0.5" stroke="#333" stroke-width="0.2">56.<tspan dx="-1.60">1</tspan><tspan dx="-1.60">2</tspan>%</text>
<text x="634.4" y="646.6" font-size="15" font-weight="bold" letter-spacing="0.6" stroke="#2a2a2a" stroke-width="0.35">6843<tspan dx="-1.25">1</tspan></text>
<text x="634.4" y="662.8" font-size="14.6" fill="#333" letter-spacing="0.5" stroke="#333" stroke-width="0.2">57.22%</text>
<text x="477.4" y="693.2" font-size="15" font-weight="bold" letter-spacing="0.6" stroke="#2a2a2a" stroke-width="0.35">68887</text>
<text x="477.4" y="707.0" font-size="14.6" fill="#333" letter-spacing="0.5" stroke="#333" stroke-width="0.2">53.76%</text>
</g><polygon points="536.7,151.8 543.6,157.8 544.6,167.6 549.5,177.5 546.5,187.3 544.6,199.2 545.5,218.9 558.3,220.9 568.2,230.7 578.1,246.5 574.1,258.3 562.6,274.5 570.5,278.5 573.6,290.8 581.7,293.6 587.1,304.4 595.3,312.5 600.7,323.4 606.1,331.5 614.2,345.1 627.8,350.5 635.9,361.4 641.4,377.6 635.9,383 633.2,396.6 633.2,421 638.6,429.2 649.5,431.9 679.3,430.5 684.7,442.7 692.9,450.8 692.9,461.7 687.5,469.8 682,486.1 674.5,489.9 674.5,497.3 686.8,502.2 701.6,504.7 714,497.3 718.9,502.2 733.7,517 741.1,531.8 738.6,541.6 731.2,551.5 733.7,558.9 743.5,570 755.9,565.1 765.7,570 763.3,573.7 755.9,588.5 743.5,593.4 743.5,600.8 760.8,608.2 765.7,616.8 746,630.4 731.2,640.3 721.4,647.7 718.9,657.5 706.6,662.4 704.1,667.4 695.3,657.6 688.7,656.5 677.6,664.3 664.3,661 651,659.9 642.1,659.9 635.4,668.7 628.8,662.1 619.9,652.1 606.6,655.4 599.9,662.1 595.5,664.3 577.7,661 568.9,668.7 553.3,675.4 548.9,684.3 556.6,691 555.5,695.4 550.9,695.4 539.8,693.2 535.4,684.3 513.2,673.2 506.5,677.6 502,686.5 491,704.3 486.5,715.3 473.2,724.2 451,735.3 447.7,726.4 453.2,717.6 462.1,713.1 464.3,704.3 459.9,688.7 457.7,675.4 462.1,666.5 466.5,655.4 464.3,648.8 453.2,644.3 444.4,631 439.9,620 431,613.3 428.8,604.4 418.8,593.3 420,588.9 442.1,577.8 444.4,571.1 423.3,560 420.4,555.8 423.4,546 432.3,538.1 431.3,522.3 429.3,506.5 427.3,494.7 431.3,482.8 427.3,467.1 426.4,455.2 417.5,445.4 416.5,431.6 418.5,419.7 419.4,407.9 428.3,402 425.4,386.2 409.6,378.3 407.6,374.4 401.7,364.5 401.7,358.6 411.6,354.7 419.4,348.8 421.4,342.8 417.5,335 408.6,327.1 409.6,305.4 407.6,291.6 405.6,279.7 411.6,278.7 419.4,289.6 427.3,304.4 429.3,307.3 439.2,304.4 449,303.4 453,299.4 453,281.7 466,272.5 467.8,262 465.6,246.5 475.5,232.7 477.5,218.9 480.4,207 481.4,195.2 482.4,186.4 499.2,180.4 518.9,181.4 519.9,169.6 520.9,159.7 526.8,154.8" fill="none" stroke="#1a1a1a" stroke-width="2.2" stroke-linejoin="round"/></svg>
</body></html>
